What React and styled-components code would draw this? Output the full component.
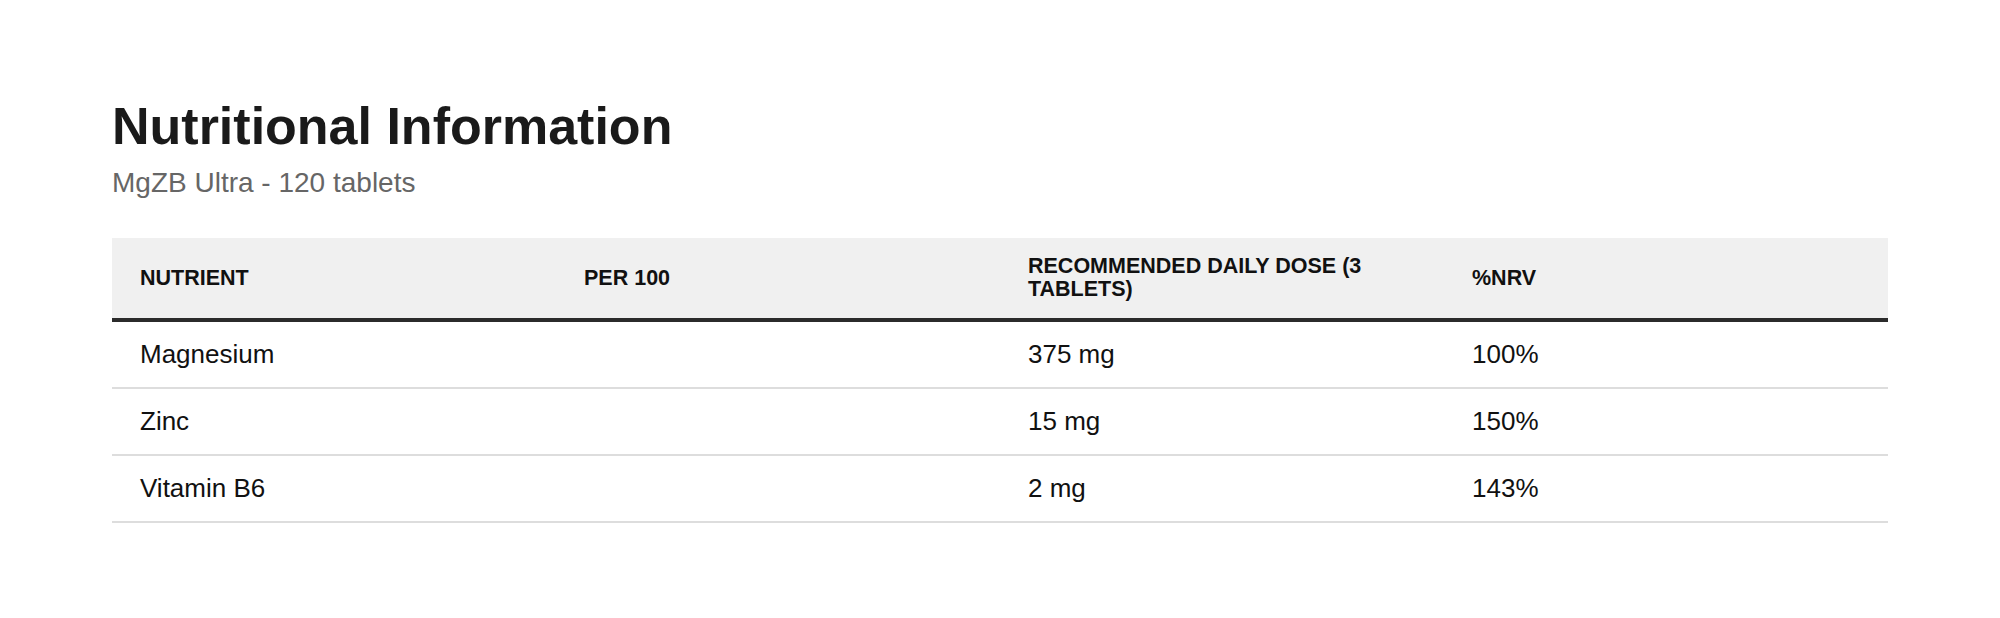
import React from 'react';
import styled, { createGlobalStyle } from 'styled-components';

const GlobalStyle = createGlobalStyle`
  html, body {
    margin: 0;
    padding: 0;
    background: #ffffff;
  }
  body {
    font-family: 'Liberation Sans', Arial, sans-serif;
  }
`;

const Page = styled.div`
  padding: 95px 112px 0;
`;

const Title = styled.h1`
  margin: 0;
  font-size: 52px;
  line-height: 62px;
  font-weight: 700;
  color: #1a1a1a;
`;

const Subtitle = styled.p`
  margin: 9px 0 38px;
  font-size: 28px;
  line-height: 34px;
  color: #666666;
`;

const Table = styled.table`
  width: 100%;
  border-collapse: collapse;
  table-layout: fixed;
`;

const HeadRow = styled.tr`
  background: #f0f0f0;
  border-bottom: 4px solid #2b2b2b;
`;

const HeadCell = styled.th`
  padding: 17px 28px 17px;
  text-align: left;
  vertical-align: middle;
  font-size: 21.5px;
  line-height: 23px;
  font-weight: 700;
  text-transform: uppercase;
  color: #111111;
`;

const Row = styled.tr`
  border-bottom: 2px solid #dddddd;
`;

const Cell = styled.td`
  padding: 17px 28px 18px;
  font-size: 26px;
  line-height: 30px;
  color: #111111;
`;

const columns = ['Nutrient', 'Per 100', 'Recommended daily dose (3 tablets)', '%NRV'];

const nutrients = [
  { name: 'Magnesium', per100: '', dose: '375 mg', nrv: '100%' },
  { name: 'Zinc', per100: '', dose: '15 mg', nrv: '150%' },
  { name: 'Vitamin B6', per100: '', dose: '2 mg', nrv: '143%' },
];

export default function App() {
  return (
    <>
      <GlobalStyle />
      <Page>
        <Title>Nutritional Information</Title>
        <Subtitle>MgZB Ultra - 120 tablets</Subtitle>
        <Table>
          <thead>
            <HeadRow>
              {columns.map(col => (
                <HeadCell key={col}>{col}</HeadCell>
              ))}
            </HeadRow>
          </thead>
          <tbody>
            {nutrients.map(item => (
              <Row key={item.name}>
                <Cell>{item.name}</Cell>
                <Cell>{item.per100}</Cell>
                <Cell>{item.dose}</Cell>
                <Cell>{item.nrv}</Cell>
              </Row>
            ))}
          </tbody>
        </Table>
      </Page>
    </>
  );
}
